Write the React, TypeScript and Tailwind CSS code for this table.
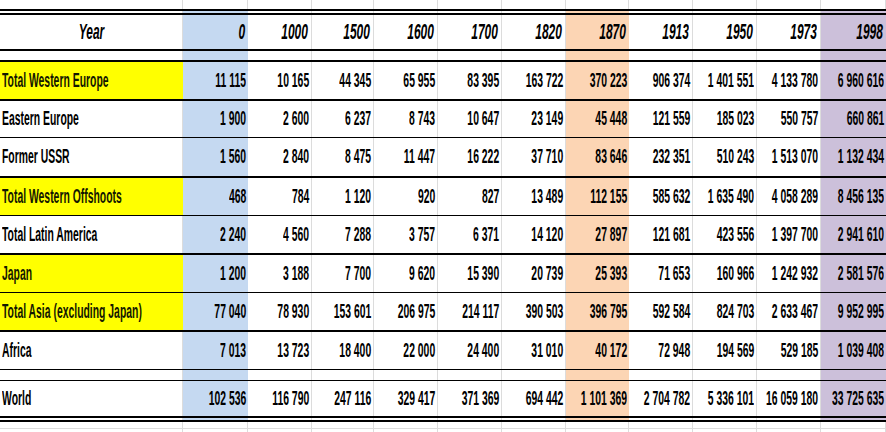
import React from 'react';

const YEARS = ['0', '1000', '1500', '1600', '1700', '1820', '1870', '1913', '1950', '1973', '1998'];

type Region = {
  name: string;
  yellow?: boolean;
  values: string[];
  h: string;
};

const REGIONS: Region[] = [
  { name: 'Total Western Europe', yellow: true, h: 'h-[37px]', values: ['11 115', '10 165', '44 345', '65 955', '83 395', '163 722', '370 223', '906 374', '1 401 551', '4 133 780', '6 960 616'] },
  { name: 'Eastern Europe', h: 'h-[36px]', values: ['1 900', '2 600', '6 237', '8 743', '10 647', '23 149', '45 448', '121 559', '185 023', '550 757', '660 861'] },
  { name: 'Former USSR', h: 'h-[38px]', values: ['1 560', '2 840', '8 475', '11 447', '16 222', '37 710', '83 646', '232 351', '510 243', '1 513 070', '1 132 434'] },
  { name: 'Total Western Offshoots', yellow: true, h: 'h-[37px]', values: ['468', '784', '1 120', '920', '827', '13 489', '112 155', '585 632', '1 635 490', '4 058 289', '8 456 135'] },
  { name: 'Total Latin America', h: 'h-[37px]', values: ['2 240', '4 560', '7 288', '3 757', '6 371', '14 120', '27 897', '121 681', '423 556', '1 397 700', '2 941 610'] },
  { name: 'Japan', yellow: true, h: 'h-[37px]', values: ['1 200', '3 188', '7 700', '9 620', '15 390', '20 739', '25 393', '71 653', '160 966', '1 242 932', '2 581 576'] },
  { name: 'Total Asia (excluding Japan)', yellow: true, h: 'h-[37px]', values: ['77 040', '78 930', '153 601', '206 975', '214 117', '390 503', '396 795', '592 584', '824 703', '2 633 467', '9 952 995'] },
  { name: 'Africa', h: 'h-[37px]', values: ['7 013', '13 723', '18 400', '22 000', '24 400', '31 010', '40 172', '72 948', '194 569', '529 185', '1 039 408'] },
];

const WORLD: Region = {
  name: 'World',
  h: 'h-[35px]',
  values: ['102 536', '116 790', '247 116', '329 417', '371 369', '694 442', '1 101 369', '2 704 782', '5 336 101', '16 059 180', '33 725 635'],
};

// rule below each region row
const RULES = ['h-[2px]', 'h-px', 'h-[2px]', 'h-px', 'h-[2px]', 'h-px', 'h-[2px]'];

const GRID = 'grid grid-cols-[183px_65px_64px_62px_64px_64px_64px_63px_64px_64px_64px_65px]';
const FONT = "font-['Liberation_Sans',Arial,sans-serif] font-bold text-black";

// column fill; white columns show the spreadsheet gridline on the right
const fill = (i: number) => {
  if (i === 1) return 'bg-[#c5d9f1]';
  if (i === 7) return 'bg-[#fcd5b4]';
  if (i === 11) return 'bg-[#ccc0da]';
  return 'bg-white border-r border-[#dcdcdc]';
};

const Rule = ({ h }: { h: string }) => <div className={`${h} bg-black`} />;

const Spacer = ({ h }: { h: string }) => (
  <div className={`${GRID} ${h}`}>
    {Array.from({ length: 12 }).map((_, i) => (
      <div key={i} className={fill(i)} />
    ))}
  </div>
);

const Gridlines = ({ h, bottom }: { h: string; bottom?: boolean }) => (
  <div className={`${GRID} ${h}`}>
    {Array.from({ length: 12 }).map((_, i) => (
      <div key={i} className={`bg-white border-r border-[#dcdcdc] ${bottom ? 'shadow-[inset_0_-3px_0_#fff,inset_0_-4px_0_#dcdcdc]' : ''}`} />
    ))}
  </div>
);

const DataRow = ({ row }: { row: Region }) => (
  <div className={`${GRID} ${row.h} ${FONT} text-[20px] leading-none`}>
    <div className={`flex items-center pl-[2px] pb-[2px] ${row.yellow ? 'bg-[#ffff00] text-[#141800]' : 'bg-white border-r border-[#dcdcdc]'}`}>
      <span className="inline-block whitespace-nowrap origin-left scale-x-[0.52]">{row.name}</span>
    </div>
    {row.values.map((v, i) => (
      <div key={i} className={`flex items-center justify-end pr-[2px] pb-[2px] ${fill(i + 1)}`}>
        <span className="inline-block shrink-0 whitespace-nowrap origin-right scale-x-[0.52]">{v}</span>
      </div>
    ))}
  </div>
);

export default function App() {
  return (
    <div className="w-[886px] h-[432px] overflow-hidden bg-white">
      <Gridlines h="h-[9px]" />
      <Rule h="h-[2px]" />
      <Spacer h="h-[2px]" />
      <Rule h="h-[2px]" />
      <div className={`${GRID} h-[34px] ${FONT} italic text-[22px] leading-none`}>
        <div className="flex items-center justify-center bg-white border-r border-[#dcdcdc]">
          <span className="inline-block whitespace-nowrap origin-center scale-x-[0.545]">Year</span>
        </div>
        {YEARS.map((y, i) => (
          <div key={y} className={`flex items-center justify-end pr-[3px] ${fill(i + 1)}`}>
            <span className="inline-block shrink-0 whitespace-nowrap origin-right scale-x-[0.545]">{y}</span>
          </div>
        ))}
      </div>
      <Rule h="h-[2px]" />
      <Spacer h="h-[9px]" />
      <Rule h="h-[2px]" />
      {REGIONS.map((r, i) => (
        <React.Fragment key={r.name}>
          <DataRow row={r} />
          {i < RULES.length && <Rule h={RULES[i]} />}
        </React.Fragment>
      ))}
      <Rule h="h-px" />
      <Spacer h="h-[10px]" />
      <Rule h="h-px" />
      <DataRow row={WORLD} />
      <Rule h="h-[2px]" />
      <Spacer h="h-[2px]" />
      <Rule h="h-[2px]" />
      <Gridlines h="h-[10px]" bottom />
    </div>
  );
}
